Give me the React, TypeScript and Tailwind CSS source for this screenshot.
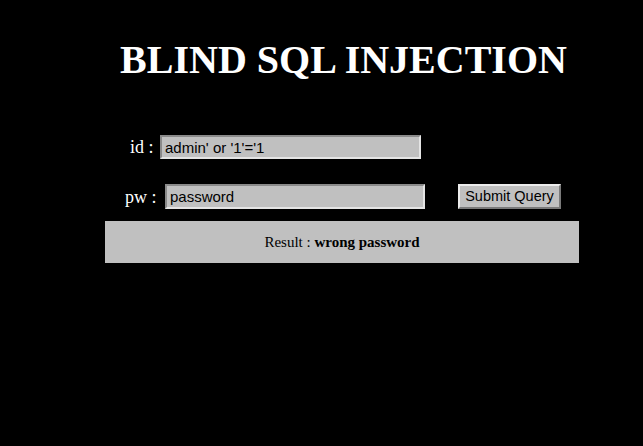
import React from "react";

export default function App() {
  const inputCls =
    "h-full bg-[#c0c0c0] text-black text-[15px] pl-[3px] outline-none border-2 border-solid border-t-[#8a8a8a] border-l-[#8a8a8a] border-b-[#e4e4e4] border-r-[#e4e4e4] [font-family:'Liberation_Sans',Arial,sans-serif]";
  return (
    <div className="w-full h-[446px] bg-black overflow-hidden [font-family:'Liberation_Serif','Times_New_Roman',serif]">
      <div className="ml-[105px] w-[474px] pt-[37px]">
        <h1 className="text-center text-white font-bold text-[40px] leading-[46px] h-[46px] pl-[3px]">
          BLIND SQL INJECTION
        </h1>
        <div className="mt-[52px] h-[24px] flex items-center">
          <span className="ml-[25px] w-[30px] text-white text-[18px] leading-[24px]">id :</span>
          <input className={`${inputCls} w-[261px]`} defaultValue="admin' or '1'='1" />
        </div>
        <div className="mt-[25px] h-[25px] flex items-center">
          <span className="ml-[20px] w-[40px] text-white text-[18px] leading-[24px]">pw :</span>
          <input className={`${inputCls} w-[260px]`} defaultValue="password" />
          <button className="ml-[33px] w-[103px] h-full bg-[#c0c0c0] text-black text-[14.5px] leading-none border-2 border-solid border-t-[#ececec] border-l-[#ececec] border-b-[#7a7a7a] border-r-[#7a7a7a] [font-family:'Liberation_Sans',Arial,sans-serif]">
            Submit Query
          </button>
        </div>
        <div className="mt-[12px] h-[42px] bg-[#c0c0c0] flex items-center justify-center text-black text-[15px]">
          <span>
            Result : <b>wrong password</b>
          </span>
        </div>
      </div>
    </div>
  );
}
